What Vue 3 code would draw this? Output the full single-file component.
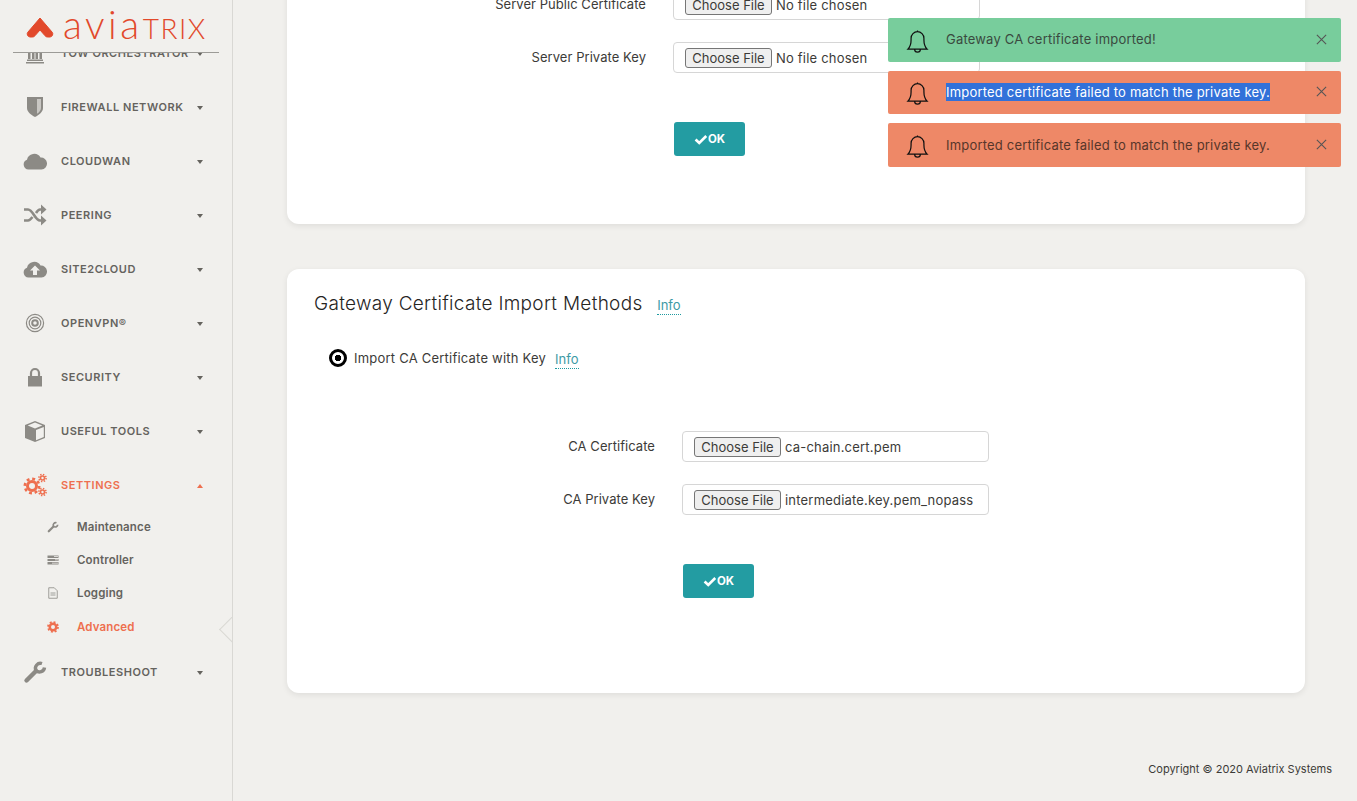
<template>
  <div class="page">
    <aside class="sidebar">
      <div class="brand">
        <svg class="brand__mark" viewBox="0 0 30 22">
          <path d="M15 2 L27 16 a3 3 0 0 1 -2 5 h-2.5 a3 3 0 0 1 -2.4 -1.2 L15 14 L9.900 19.800 a3 3 0 0 1 -2.400 1.200 H5 a3 3 0 0 1 -2 -5 Z" fill="#e2492b" stroke="#e2492b" stroke-width="1" stroke-linejoin="round" />
        </svg>
        <span class="brand__name">avia<span class="brand__caps">TRIX</span></span>
      </div>
      <nav class="nav">
        <template v-for="item in menu" :key="item.label">
          <div class="nav__row" :class="{ 'is-active': item.open }">
            <svg class="nav__icon" viewBox="0 0 24 24" v-html="icons[item.icon]"></svg>
            <span class="nav__label">{{ item.label }}</span>
            <span class="caret" :class="{ 'caret--up': item.open }"></span>
          </div>
          <div v-if="item.open" class="sub">
            <div
              v-for="sub in item.children"
              :key="sub.label"
              class="sub__row"
              :class="{ 'is-active': sub.active }"
            >
              <svg class="sub__icon" viewBox="0 0 24 24" v-html="icons[sub.icon]"></svg>
              <span>{{ sub.label }}</span>
            </div>
          </div>
        </template>
      </nav>
      <div class="notch"></div>
    </aside>

    <main class="main">
      <section class="card card--server">
        <div class="form form--server">
          <div v-for="row in serverRows" :key="row.label" class="form__row">
            <label class="form__label">{{ row.label }}</label>
            <div class="file">
              <button class="file__btn" type="button">Choose File</button>
              <span class="file__name">{{ row.file }}</span>
            </div>
          </div>
          <button class="ok" type="button">
            <svg viewBox="0 0 16 12" class="ok__check"><path d="M1.800 6 L6 10 L14 2" /></svg>OK
          </button>
        </div>
      </section>

      <section class="card card--gateway">
        <h2 class="card__title">
          Gateway Certificate Import Methods <a class="info info--title">Info</a>
        </h2>
        <div class="radio-row">
          <span class="radio"></span>
          <span class="radio-row__text">Import CA Certificate with Key</span>
          <a class="info info--radio">Info</a>
        </div>
        <div class="form form--gateway">
          <div v-for="row in gatewayRows" :key="row.label" class="form__row">
            <label class="form__label">{{ row.label }}</label>
            <div class="file">
              <button class="file__btn" type="button">Choose File</button>
              <span class="file__name">{{ row.file }}</span>
            </div>
          </div>
          <button class="ok" type="button">
            <svg viewBox="0 0 16 12" class="ok__check"><path d="M1.800 6 L6 10 L14 2" /></svg>OK
          </button>
        </div>
      </section>

      <footer class="copyright">Copyright © 2020 Aviatrix Systems</footer>
    </main>

    <div class="toasts">
      <div v-for="(toast, i) in toasts" :key="i" class="toast" :class="'toast--' + toast.type">
        <svg class="toast__bell" viewBox="0 0 24 26">
          <path d="M2 21 c2.500 -2.500 3.300 -5 3.300 -9.500 V9.500 a6.700 6.700 0 0 1 13.400 0 v2 c0 4.500 .8 7 3.300 9.500 Z M12 2.800 V1.500 M9 21 a3 3 0 0 0 6 0" />
        </svg>
        <span class="toast__text" :class="{ 'is-selected': toast.selected }">{{ toast.text }}</span>
        <svg class="toast__close" viewBox="0 0 10 10"><path d="M.8 .8 L9.200 9.200 M9.200 .8 L.8 9.200" /></svg>
      </div>
    </div>
  </div>
</template>

<script setup>
const icons = {
  bank: '<path fill="currentColor" d="M3 21h18v1.500H3z M4 18.500h16V20H4z M5 11h2.500v7H5z M9 11h2.500v7H9z M12.500 11H15v7h-2.500z M16.500 11H19v7h-2.500z M3 8h18v2H3z"/>',
  shield: '<path fill="currentColor" d="M4 2h16v11c0 4-4 7-8 9-4-2-8-5-8-9z"/><path fill="#c9c7c3" d="M14 4h4v9c0 2.500-2 4.500-4 5.800z"/>',
  cloud: '<path fill="currentColor" d="M5.500 20.500a5 5 0 0 1-1.500-9.700A7.300 7.300 0 0 1 17.500 8.500a6 6 0 0 1 1 12z"/>',
  shuffle: '<g fill="none" stroke="currentColor" stroke-width="2.600"><path d="M1 6.500h4c5 0 7 11 12 11h2"/><path d="M1 17.500h4c2 0 3-1.500 4.500-3.500M13 10c1-1.500 2.500-3.500 4-3.500h2"/></g><path fill="currentColor" d="M18 1.500l5.500 5-5.500 5zM18 12.500l5.500 5-5.500 5z"/>',
  upload: '<path fill="currentColor" d="M5.500 20.500a5 5 0 0 1-1.500-9.700A7.300 7.300 0 0 1 17.500 8.500a6 6 0 0 1 1 12z"/><path fill="#f1f0ed" d="M12 8.500l5 5h-3v4.500h-4v-4.500H7z"/>',
  target: '<g fill="none" stroke="currentColor"><circle cx="12" cy="12" r="8.600" stroke-width="1.200"/><circle cx="12" cy="12" r="5.800" stroke-width="1.200"/><circle cx="12" cy="12" r="2.800" stroke-width="2"/></g>',
  lock: '<path fill="none" stroke="currentColor" stroke-width="2.200" d="M8 12V8a4 4 0 0 1 8 0v4"/><path fill="currentColor" d="M5 11h14v10.500H5z"/>',
  cube: '<path fill="currentColor" d="M12 2l10 4v13l-10 4-10-4V6z"/><path fill="#f1f0ed" d="M12 3.600L19.300 6.500 12 9.400 4.700 6.500zM13 11l7.800-3.100v10.200L13 21.200z"/>',
  cogs: '<g fill="none" stroke="currentColor"><circle cx="9" cy="13" r="4.500" stroke-width="3"/><circle cx="9" cy="13" r="7.200" stroke-width="2.600" stroke-dasharray="2.900 2.750"/><circle cx="19.500" cy="5" r="2" stroke-width="1.600"/><circle cx="19.500" cy="5" r="3.600" stroke-width="1.500" stroke-dasharray="1.400 1.430"/><circle cx="19.500" cy="19" r="2" stroke-width="1.600"/><circle cx="19.500" cy="19" r="3.600" stroke-width="1.500" stroke-dasharray="1.400 1.430"/></g>',
  wrench: '<path fill="none" stroke="currentColor" stroke-width="4.400" stroke-linecap="round" d="M3.500 20.500L13 11"/><path fill="none" stroke="currentColor" stroke-width="3.400" d="M19 3.500a5 5 0 0 0-6 7 5 5 0 0 0 8.500-3"/>',
  server: '<path fill="currentColor" d="M1 3h22v5H1zM1 10h22v4H1zM1 16h22v5H1z"/><path fill="#f1f0ed" d="M14 4.500h8v1.500h-8zM16 11h6v1.500h-6zM10 17.500h12V19H10z"/>',
  file: '<path fill="none" stroke="currentColor" stroke-width="1.600" d="M3.500 1.500h11l6 6v15h-17z"/><path stroke="currentColor" stroke-width="1.600" d="M7 12h10M7 16h10"/>',
  cog: '<g fill="none" stroke="currentColor"><circle cx="12" cy="12" r="6.500" stroke-width="5"/><circle cx="12" cy="12" r="10" stroke-width="3.500" stroke-dasharray="3.900 3.950"/></g>',
};

const menu = [
  { label: "TOW ORCHESTRATOR", icon: "bank" },
  { label: "FIREWALL NETWORK", icon: "shield" },
  { label: "CLOUDWAN", icon: "cloud" },
  { label: "PEERING", icon: "shuffle" },
  { label: "SITE2CLOUD", icon: "upload" },
  { label: "OPENVPN®", icon: "target" },
  { label: "SECURITY", icon: "lock" },
  { label: "USEFUL TOOLS", icon: "cube" },
  {
    label: "SETTINGS",
    icon: "cogs",
    open: true,
    children: [
      { label: "Maintenance", icon: "wrench" },
      { label: "Controller", icon: "server" },
      { label: "Logging", icon: "file" },
      { label: "Advanced", icon: "cog", active: true },
    ],
  },
  { label: "TROUBLESHOOT", icon: "wrench" },
];

const serverRows = [
  { label: "Server Public Certificate", file: "No file chosen" },
  { label: "Server Private Key", file: "No file chosen" },
];

const gatewayRows = [
  { label: "CA Certificate", file: "ca-chain.cert.pem" },
  { label: "CA Private Key", file: "intermediate.key.pem_nopass" },
];

const toasts = [
  { type: "ok", text: "Gateway CA certificate imported!" },
  { type: "error", text: "Imported certificate failed to match the private key.", selected: true },
  { type: "error", text: "Imported certificate failed to match the private key." },
];
</script>

<style scoped>
.page {
  position: relative;
  height: 801px;
  overflow: hidden;
  display: flex;
  background: #f1f0ed;
  font-family: Inter, "Noto Sans", sans-serif;
  color: #3c3b38;
}

.sidebar {
  position: relative;
  flex: none;
  width: 232px;
  height: 100%;
  border-right: 1px solid #d9d8d4;
  overflow: hidden;
}

.brand {
  position: absolute;
  top: 0;
  left: 13px;
  width: 206px;
  height: 53px;
  z-index: 2;
  background: #f1f0ed;
  border-bottom: 1px solid #9c9b97;
  display: flex;
  align-items: flex-start;
  gap: 8px;
  box-sizing: border-box;
}
.brand__mark {
  width: 30px;
  height: 22px;
  margin: 16px 0 0 12px;
}
.brand__name {
  font-family: "Lato", sans-serif;
  font-weight: 300;
  font-size: 39px;
  line-height: 48px;
  letter-spacing: 3.500px;
  color: #e2492b;
  white-space: nowrap;
}
.brand__caps {
  font-size: 28px;
  letter-spacing: 1.500px;
}

.nav {
  padding-top: 26px;
}
.nav__row {
  display: flex;
  align-items: center;
  height: 54px;
  padding-left: 23px;
  color: #65635e;
  font-size: 11px;
  font-weight: 600;
  letter-spacing: 0.55px;
}
.nav__row.is-active,
.sub__row.is-active {
  color: #ee6f4f;
}
.nav__icon {
  flex: none;
  width: 24px;
  height: 24px;
  margin-right: 14px;
  color: #8c8a85;
}
.is-active .nav__icon,
.is-active .sub__icon {
  color: #ee6f4f;
}
.nav__label {
  flex: 1;
}
.caret {
  width: 0;
  height: 0;
  margin-right: 29px;
  margin-top: 2px;
  border-left: 3.500px solid transparent;
  border-right: 3.500px solid transparent;
  border-top: 4px solid #65635e;
}
.caret--up {
  border-top: 0;
  border-bottom: 4px solid #ee6f4f;
}

.sub {
  margin: -2px 0 1.500px;
}
.sub__row {
  display: flex;
  align-items: center;
  height: 33.300px;
  padding-left: 47px;
  font-size: 11.500px;
  font-weight: 600;
  letter-spacing: 0.15px;
  color: #65635e;
}
.sub__icon {
  flex: none;
  width: 12px;
  height: 12px;
  margin-right: 18px;
  color: #8c8a85;
}

.notch {
  position: absolute;
  top: 620px;
  left: 223px;
  width: 19px;
  height: 19px;
  background: #f1f0ed;
  border-left: 1px solid #d9d8d4;
  border-bottom: 1px solid #d9d8d4;
  transform: rotate(45deg);
  box-sizing: border-box;
}

.main {
  flex: 1;
  margin-top: -60px;
  padding: 0 52px 0 54px;
}

.card {
  background: #fff;
  border-radius: 12px;
  box-shadow: 0 2px 6px rgba(0, 0, 0, 0.08);
}
.card--server {
  height: 284px;
  box-sizing: border-box;
  padding-top: 49px;
}
.card--gateway {
  height: 424px;
  box-sizing: border-box;
  margin-top: 45px;
  padding: 21px 27px 0;
}
.card__title {
  margin: 0;
  font-size: 19px;
  font-weight: 300;
  line-height: 28px;
  letter-spacing: 0.3px;
  color: #26251f;
}

.info {
  font-size: 13px;
  font-weight: 400;
  letter-spacing: 0;
  color: #3e9aa5;
  border-bottom: 1px dotted #1f9aa0;
  padding-bottom: 1px;
}
.info--title {
  margin-left: 9px;
}
.info--radio {
  margin-top: 3px;
}

.radio-row {
  display: flex;
  align-items: center;
  margin: 29px 0 0 15px;
  height: 20px;
  font-size: 13px;
}
.radio {
  box-sizing: border-box;
  width: 18px;
  height: 18px;
  margin-right: 7px;
  border: 3px solid #000;
  border-radius: 50%;
  background: radial-gradient(circle, #000 0 3px, #fff 3.500px);
}
.radio-row__text {
  margin-right: 9px;
  letter-spacing: 0.22px;
}

.form__row {
  display: flex;
  align-items: center;
  height: 31px;
  margin-bottom: 22px;
}
.form__label {
  width: 100%;
  max-width: 359px;
  text-align: right;
  font-size: 13px;
  letter-spacing: 0.05px;
  margin-right: 27px;
  position: relative;
  top: -1px;
  flex: none;
}
.form--gateway {
  margin: 63px 0 0 -27px;
  padding-left: 9px;
}

.file {
  flex: none;
  box-sizing: border-box;
  width: 307px;
  height: 31px;
  border: 1px solid #d6d6d6;
  border-radius: 4px;
  background: #fff;
  display: flex;
  align-items: center;
  padding-left: 11px;
  font-size: 13px;
  overflow: hidden;
  white-space: nowrap;
}
.file__btn {
  flex: none;
  box-sizing: border-box;
  width: 87px;
  height: 20px;
  margin: 0 4px 0 0;
  padding: 0;
  font: inherit;
  color: #3c3b38;
  background: #efefef;
  border: 1px solid #767676;
  border-radius: 3px;
}
.file__name {
  letter-spacing: 0.2px;
}

.ok {
  display: flex;
  align-items: center;
  justify-content: center;
  box-sizing: border-box;
  width: 71px;
  height: 34px;
  margin: 49px 0 0 387px;
  padding: 0;
  border: 0;
  border-radius: 3px;
  background: #239ca2;
  color: #fff;
  font: 700 11.500px Inter, sans-serif;
}
.ok__check {
  width: 14px;
  height: 11px;
  fill: none;
  stroke: #fff;
  stroke-width: 3;
}

.copyright {
  position: absolute;
  right: 25px;
  top: 762px;
  font-size: 11px;
}

.toasts {
  position: absolute;
  top: 18px;
  left: 888px;
  width: 453px;
  display: flex;
  flex-direction: column;
  gap: 9px;
}
.toast {
  display: flex;
  align-items: center;
  height: 43.670px;
  border-radius: 2px;
  padding-left: 18px;
  font-size: 13px;
  letter-spacing: 0.2px;
  color: #3a4a40;
}
.toast--ok {
  background: #78cd9c;
}
.toast--error {
  background: #ee8867;
  color: #57362a;
}
.toast__bell {
  flex: none;
  width: 23px;
  height: 25px;
  margin: 3px 17px 0 0;
  fill: none;
  stroke: #111;
  stroke-width: 1.300;
}
.toast__text {
  flex: 1;
  margin-top: -1px;
}
.toast__text.is-selected {
  flex: none;
  background: #3271d9;
  color: #fff;
  line-height: 18px;
  margin-right: auto;
}
.toast__close {
  flex: none;
  width: 11px;
  height: 11px;
  margin: -1px 14px 0 19px;
  fill: none;
  stroke: #555;
  stroke-width: 1;
}
</style>
